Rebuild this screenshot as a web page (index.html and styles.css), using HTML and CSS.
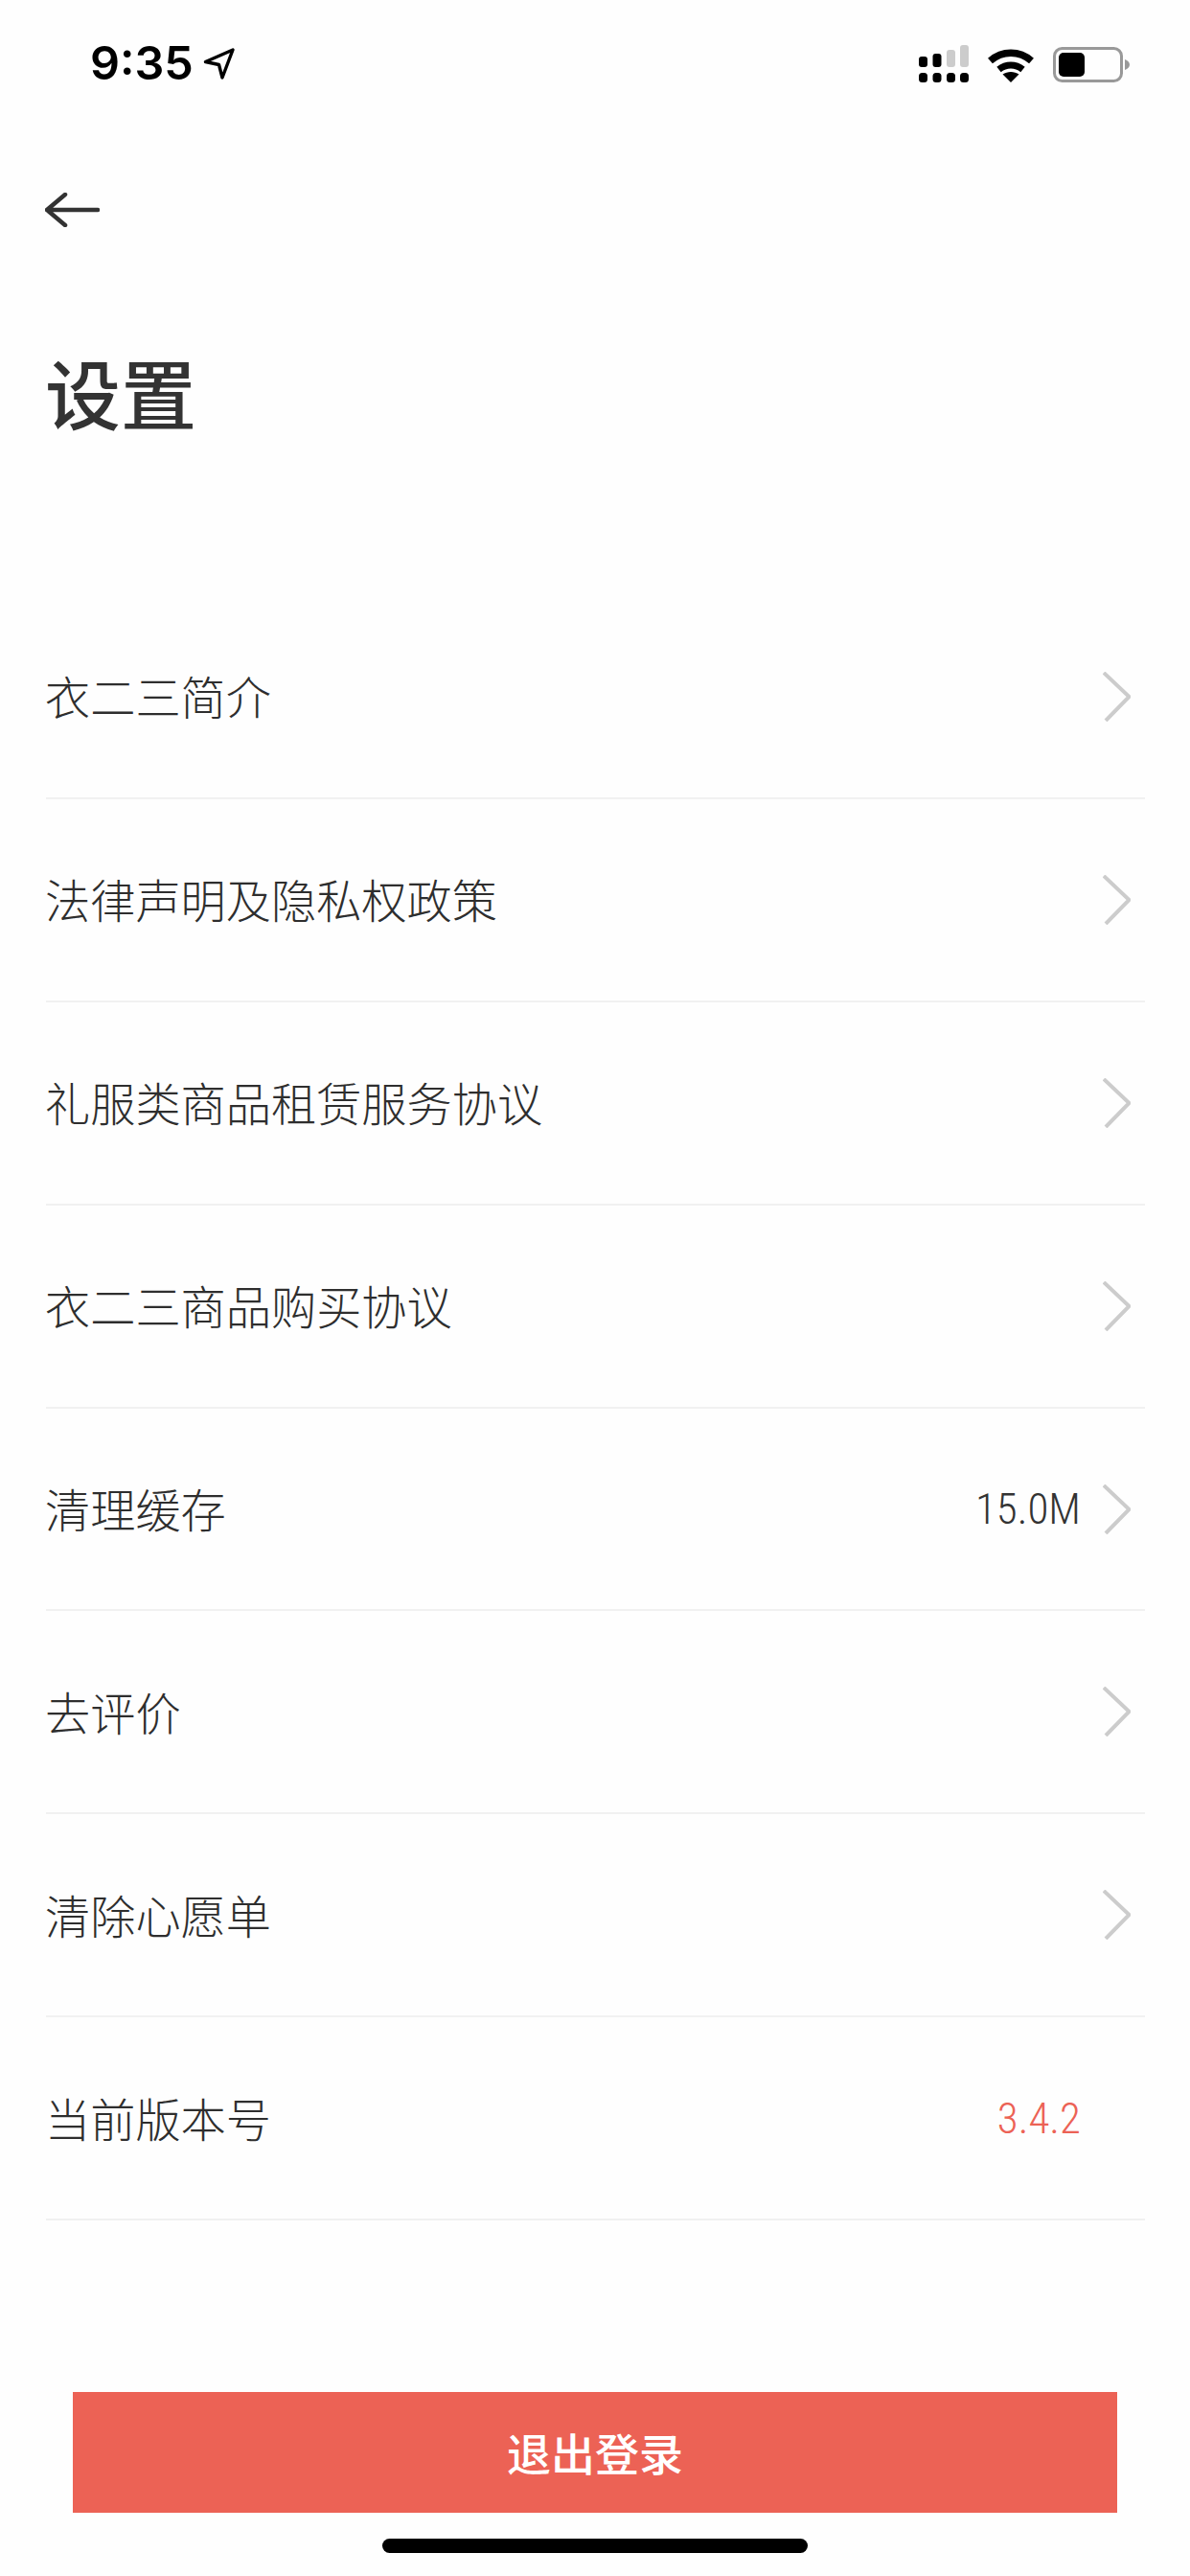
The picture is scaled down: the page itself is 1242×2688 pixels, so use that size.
FILE: index.html
```html
<!DOCTYPE html>
<html lang="zh-CN">
<head>
    <meta charset="UTF-8">
    <meta name="viewport" content="width=device-width, initial-scale=1.0">
    <title>设置</title>
    <link rel="stylesheet" href="styles.css">
</head>
<body>
    <div class="page">
        <div class="status-bar">
            <div class="status-left">
                <span class="time">9:35</span>
                <svg class="icon-location" viewBox="0 0 33 33"><path d="M2.500 14.500 31 2 20 31 16.500 17.500Z" fill="none" stroke="#000" stroke-width="3.400" stroke-linejoin="round"/></svg>
            </div>
            <div class="status-right">
                <svg class="icon-signal" viewBox="0 0 52 39">
                    <rect x="0" y="12" width="9" height="11" rx="3" fill="#000"/>
                    <rect x="14.500" y="9" width="9" height="14" rx="3" fill="#000"/>
                    <rect x="29" y="5" width="9" height="18" rx="3" fill="#ccc"/>
                    <rect x="43" y="0" width="9" height="23" rx="3" fill="#ccc"/>
                    <rect x="0" y="29" width="9" height="10" rx="3.500" fill="#000"/>
                    <rect x="14.500" y="29" width="9" height="10" rx="3.500" fill="#000"/>
                    <rect x="29" y="29" width="9" height="10" rx="3.500" fill="#000"/>
                    <rect x="43" y="29" width="9" height="10" rx="3.500" fill="#000"/>
                </svg>
                <svg class="icon-wifi" viewBox="0 0 50 37">
                    <path d="M3.500 14.500C16 3.500 34 3.500 46.500 14.500" fill="none" stroke="#000" stroke-width="7.400"/>
                    <path d="M12.500 23.500C20 17.500 30 17.500 37.500 23.500" fill="none" stroke="#000" stroke-width="7"/>
                    <path d="M25 37 16.500 28.500C21.500 25 28.500 25 33.500 28.500Z" fill="#000"/>
                </svg>
                <svg class="icon-battery" viewBox="0 0 80 37">
                    <rect x="1.500" y="1.500" width="70" height="34" rx="8" fill="none" stroke="#999" stroke-width="3"/>
                    <rect x="6" y="6" width="27" height="25" rx="5" fill="#000"/>
                    <path d="M75 13C78 14 80 16 80 18.500C80 21 78 23 75 24Z" fill="#999"/>
                </svg>
            </div>
        </div>

        <div class="nav">
            <svg class="icon-back" viewBox="0 0 57 36"><path d="M21 2 2 18 21 34M2 18H55" fill="none" stroke="#333" stroke-width="4.500" stroke-linecap="round" stroke-linejoin="round"/></svg>
        </div>

        <h1 class="title">设置</h1>

        <div class="list">
            <div class="row">
                <span class="label">衣二三简介</span>
                <span class="chevron"><svg viewBox="0 0 29 52"><path d="M1 1 27.500 26 3 51" fill="none" stroke="#ccc" stroke-width="4"/></svg></span>
            </div>
            <div class="row">
                <span class="label">法律声明及隐私权政策</span>
                <span class="chevron"><svg viewBox="0 0 29 52"><path d="M1 1 27.500 26 3 51" fill="none" stroke="#ccc" stroke-width="4"/></svg></span>
            </div>
            <div class="row">
                <span class="label">礼服类商品租赁服务协议</span>
                <span class="chevron"><svg viewBox="0 0 29 52"><path d="M1 1 27.500 26 3 51" fill="none" stroke="#ccc" stroke-width="4"/></svg></span>
            </div>
            <div class="row">
                <span class="label">衣二三商品购买协议</span>
                <span class="chevron"><svg viewBox="0 0 29 52"><path d="M1 1 27.500 26 3 51" fill="none" stroke="#ccc" stroke-width="4"/></svg></span>
            </div>
            <div class="row">
                <span class="label">清理缓存</span>
                <span class="value">15.0M</span>
                <span class="chevron"><svg viewBox="0 0 29 52"><path d="M1 1 27.500 26 3 51" fill="none" stroke="#ccc" stroke-width="4"/></svg></span>
            </div>
            <div class="row">
                <span class="label">去评价</span>
                <span class="chevron"><svg viewBox="0 0 29 52"><path d="M1 1 27.500 26 3 51" fill="none" stroke="#ccc" stroke-width="4"/></svg></span>
            </div>
            <div class="row">
                <span class="label">清除心愿单</span>
                <span class="chevron"><svg viewBox="0 0 29 52"><path d="M1 1 27.500 26 3 51" fill="none" stroke="#ccc" stroke-width="4"/></svg></span>
            </div>
            <div class="row">
                <span class="label">当前版本号</span>
                <span class="value version">3.4.2</span>
                <span class="chevron"></span>
            </div>
        </div>

        <button class="logout">退出登录</button>

        <div class="home-bar"></div>
    </div>
</body>
</html>
```

FILE: styles.css
```css
* {
    box-sizing: border-box;
}

html, body {
    margin: 0;
    padding: 0;
}

body {
    font-family: "Noto Sans CJK SC", "Noto Sans", sans-serif;
    background: #fefefe;
    color: #333;
}

.page {
    position: relative;
    width: 1242px;
    height: 2688px;
    overflow: hidden;
}

.status-bar {
    height: 88px;
    padding: 44px 63px 0 94px;
    display: flex;
    justify-content: space-between;
    align-items: center;
}

.status-left {
    display: flex;
    align-items: center;
    gap: 10px;
}

.time {
    font-family: Inter, "Liberation Sans", sans-serif;
    font-size: 48.500px;
    font-weight: 600;
    line-height: 44px;
    color: #000;
}

.icon-location {
    width: 33px;
    height: 33px;
}

.status-right {
    display: flex;
    align-items: flex-end;
    gap: 19px;
}

.icon-signal {
    width: 52px;
    height: 39px;
    display: block;
}

.icon-wifi {
    width: 50px;
    height: 37px;
    display: block;
}

.icon-battery {
    width: 80px;
    height: 37px;
    display: block;
}

.nav {
    margin-top: 114px;
    padding-left: 47px;
    height: 34px;
    display: flex;
    align-items: center;
}

.icon-back {
    width: 57px;
    height: 36px;
}

.title {
    margin: 133px 0 173px;
    padding-left: 47px;
    font-size: 79px;
    line-height: 80px;
    font-weight: 500;
    color: #333;
}

.list {
    margin: 0 47px 0 48px;
}

.row {
    height: 211.900px;
    display: flex;
    align-items: center;
    gap: 23px;
    padding-right: 15px;
    border-bottom: 2px solid #f1f1f1;
}

.label {
    flex: 1;
    margin-left: -1px;
    padding-bottom: 2px;
    font-size: 47.200px;
    font-weight: 300;
    color: #2e2e2e;
}

.value {
    font-family: Roboto, "Liberation Sans", sans-serif;
    font-size: 45px;
    font-weight: 300;
    font-stretch: condensed;
    color: #333;
}

.version {
    color: #ec6255;
}

.chevron {
    width: 29px;
    height: 52px;
}

.chevron svg {
    display: block;
    width: 29px;
    height: 52px;
}

.logout {
    display: block;
    width: 1090px;
    height: 126px;
    margin: 178.800px 0 0 76px;
    padding: 0 0 2px;
    border: none;
    border-radius: 0;
    background: #ec6255;
    color: #fff;
    font-family: inherit;
    font-size: 46px;
    font-weight: 500;
}

.home-bar {
    position: absolute;
    left: 399px;
    top: 2649px;
    width: 444px;
    height: 15px;
    border-radius: 8px;
    background: #000;
}
```
